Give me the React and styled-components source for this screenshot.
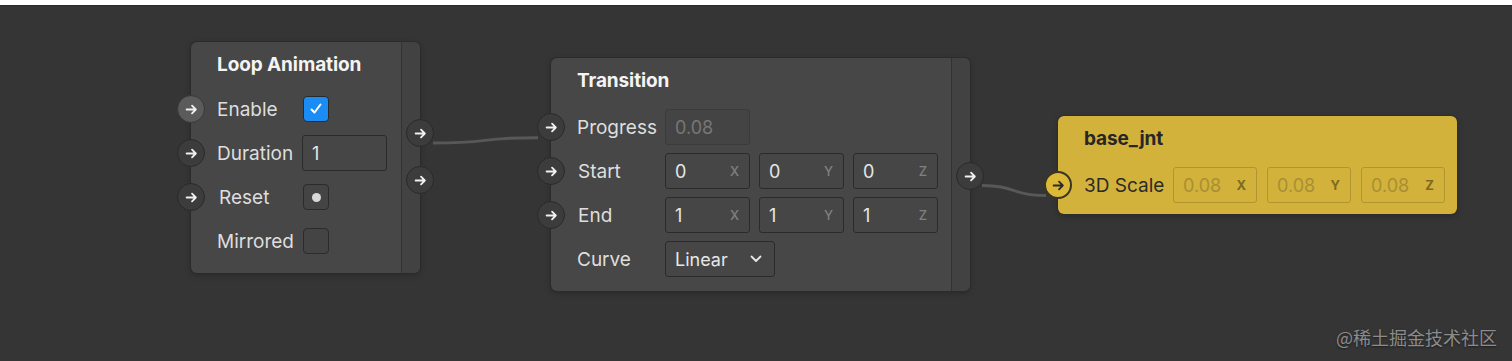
import React from 'react';
import styled, { createGlobalStyle, css } from 'styled-components';

const Global = createGlobalStyle`
  html, body { margin: 0; padding: 0; background: #ffffff; }
  body { font-family: Inter, "Noto Sans", sans-serif; -webkit-font-smoothing: antialiased; }
`;

const Page = styled.div`
  padding-top: 5px;
  background: #ffffff;
`;

const Canvas = styled.div`
  position: relative;
  height: 356px;
  background: #353535;
  overflow: hidden;
  border-top: 1px solid #2a2a2a;
  box-sizing: border-box;
`;

const Wires = styled.svg`
  position: absolute;
  inset: 0;
  width: 100%;
  height: 100%;
`;

const Node = styled.div`
  position: absolute;
  left: ${(p) => p.$x}px;
  top: ${(p) => p.$y}px;
  width: ${(p) => p.$w}px;
  display: flex;
  border-radius: 6px;
  background: ${(p) => (p.$yellow ? '#d2b23a' : '#474747')};
  box-shadow: 0 0 0 1px ${(p) => (p.$yellow ? '#2e2e2e' : '#2b2b2b')}, 0 2px 6px rgba(0, 0, 0, 0.25);
`;

const Body = styled.div`
  flex: 1;
  padding-bottom: ${(p) => p.$pb}px;
`;

const Header = styled.div`
  height: ${(p) => p.$h || 47}px;
  box-sizing: border-box;
  padding: 0 0 ${(p) => (p.$h && p.$h < 47 ? 0 : 2)}px 26px;
  display: flex;
  align-items: center;
  font-size: 19px;
  font-weight: 700;
  letter-spacing: -0.1px;
  color: ${(p) => (p.$yellow ? '#262626' : '#f4f4f4')};
`;

const Strip = styled.div`
  width: 18px;
  border-left: 1px solid #333333;
  background: #424242;
  border-radius: 0 6px 6px 0;
  display: flex;
  flex-direction: column;
  align-items: flex-end;
  padding-top: ${(p) => p.$top}px;
  gap: 19px;
`;

const Row = styled.div`
  position: relative;
  height: 44px;
  display: flex;
  align-items: center;
  padding-left: 26px;
`;

const Label = styled.div`
  width: ${(p) => p.$w}px;
  padding-left: ${(p) => p.$shift || 0}px;
  box-sizing: border-box;
  font-size: 19px;
  color: ${(p) => (p.$yellow ? '#2b2b2b' : '#dedede')};
  white-space: nowrap;
`;

const portVariants = {
  light: css`
    background: #5b5b5b;
    border: 1px solid #393939;
    color: #f0f0f0;
  `,
  dark: css`
    background: #3c3c3c;
    border: 1px solid #2a2a2a;
    color: #f0f0f0;
  `,
  yellow: css`
    background: #dcb937;
    border: 2px solid #3a3524;
    color: #2a2a2a;
  `,
};

const PortCircle = styled.div`
  width: 28px;
  height: 28px;
  border-radius: 50%;
  box-sizing: border-box;
  display: flex;
  align-items: center;
  justify-content: center;
  flex: none;
  ${(p) => portVariants[p.$variant]}
`;

const InPort = styled(PortCircle)`
  position: absolute;
  left: -14px;
  top: 50%;
  transform: translateY(-50%);
`;

const OutPort = styled(PortCircle)`
  margin-right: -14px;
`;

const Arrow = () => (
  <svg width="13" height="13" viewBox="0 0 12 12" fill="none" stroke="currentColor" strokeWidth="1.7" strokeLinecap="round" strokeLinejoin="round">
    <path d="M1.5 6 H10 M6.5 2.5 L10 6 L6.5 9.5" />
  </svg>
);

const Controls = styled.div`
  display: flex;
  gap: ${(p) => p.$gap}px;
`;

const fieldBase = css`
  box-sizing: border-box;
  height: 36px;
  border-radius: 3px;
  display: flex;
  align-items: center;
  padding: 0 10px 0 9px;
  font-size: 18px;
`;

const Field = styled.div`
  ${fieldBase}
  width: ${(p) => p.$w || 85}px;
  justify-content: space-between;
  ${(p) =>
    p.$yellow
      ? css`
          border: 1.5px solid #b09631;
          color: #a88f35;
        `
      : p.$disabled
      ? css`
          border: 1.5px solid #3b3b3b;
          background: #444444;
          color: #777777;
        `
      : css`
          border: 1.5px solid #2b2b2b;
          background: #464646;
          color: #e6e6e6;
        `}
`;

const Axis = styled.span`
  font-size: 13px;
  font-weight: ${(p) => (p.$yellow ? 700 : 500)};
  color: ${(p) => (p.$yellow ? '#7d6a22' : '#808080')};
`;

const Select = styled.div`
  ${fieldBase}
  width: 110px;
  justify-content: space-between;
  border: 1.5px solid #2b2b2b;
  background: #464646;
  color: #e6e6e6;
  padding-right: 12px;
`;

const Box = styled.div`
  width: 26px;
  height: 26px;
  box-sizing: border-box;
  border-radius: 4px;
  display: flex;
  align-items: center;
  justify-content: center;
  ${(p) =>
    p.$checked
      ? css`
          background: #1c8cf5;
          border: 1px solid #2a2a2a;
        `
      : css`
          background: #444444;
          border: 1.5px solid #2b2b2b;
        `}
`;

const Dot = styled.div`
  width: 9px;
  height: 9px;
  border-radius: 50%;
  background: #d8d8d8;
`;

const Watermark = styled.div`
  position: absolute;
  right: 15px;
  bottom: 14px;
  font-family: "Noto Sans CJK SC", "Noto Sans", sans-serif;
  font-size: 18px;
  line-height: 20px;
  color: #8c8c8c;
  text-shadow: 0 1px 2px rgba(0, 0, 0, 0.5);
`;

const Check = () => (
  <svg width="16" height="16" viewBox="0 0 16 16" fill="none" stroke="#ffffff" strokeWidth="2" strokeLinecap="round" strokeLinejoin="round">
    <path d="M3.5 8.5 L6.5 11.5 L12.5 3.5" />
  </svg>
);

const Chevron = () => (
  <svg width="12" height="8" viewBox="0 0 12 8" fill="none" stroke="#e6e6e6" strokeWidth="1.8" strokeLinecap="round" strokeLinejoin="round">
    <path d="M1.5 1.5 L6 6 L10.5 1.5" />
  </svg>
);

const Vec = ({ values, yellow, w, gap }) => (
  <Controls $gap={gap}>
    {['X', 'Y', 'Z'].map((a, i) => (
      <Field key={a} $yellow={yellow} $w={w}>
        <span>{values[i]}</span>
        <Axis $yellow={yellow}>{a}</Axis>
      </Field>
    ))}
  </Controls>
);

export default function App() {
  return (
    <Page>
      <Global />
      <Canvas>
        <Wires viewBox="0 -5 1512 356" preserveAspectRatio="none">
          <path d="M433 132.5 C 495 132.5, 475 127, 538 127" stroke="#585858" strokeWidth="3" fill="none" />
          <path d="M982 175 C 1015 175, 1012 185, 1046 185" stroke="#585858" strokeWidth="3" fill="none" />
        </Wires>

        <Node $x={191} $y={36} $w={229}>
          <Body $pb={10}>
            <Header $h={45}>Loop Animation</Header>
            <Row>
              <InPort $variant="light"><Arrow /></InPort>
              <Label $w={86}>Enable</Label>
              <Box $checked><Check /></Box>
            </Row>
            <Row>
              <InPort $variant="dark"><Arrow /></InPort>
              <Label $w={85}>Duration</Label>
              <Field $w={85}><span>1</span></Field>
            </Row>
            <Row>
              <InPort $variant="dark"><Arrow /></InPort>
              <Label $w={86} $shift={2}>Reset</Label>
              <Box><Dot /></Box>
            </Row>
            <Row>
              <Label $w={86}>Mirrored</Label>
              <Box />
            </Row>
          </Body>
          <Strip $top={77}>
            <OutPort $variant="dark"><Arrow /></OutPort>
            <OutPort $variant="dark"><Arrow /></OutPort>
          </Strip>
        </Node>

        <Node $x={551} $y={52} $w={419}>
          <Body $pb={10}>
            <Header>Transition</Header>
            <Row>
              <InPort $variant="dark"><Arrow /></InPort>
              <Label $w={88}>Progress</Label>
              <Field $disabled $w={85}><span>0.08</span></Field>
            </Row>
            <Row>
              <InPort $variant="dark"><Arrow /></InPort>
              <Label $w={88} $shift={1}>Start</Label>
              <Vec gap={9} values={['0', '0', '0']} />
            </Row>
            <Row>
              <InPort $variant="dark"><Arrow /></InPort>
              <Label $w={88} $shift={1}>End</Label>
              <Vec gap={9} values={['1', '1', '1']} />
            </Row>
            <Row>
              <Label $w={88}>Curve</Label>
              <Select>
                <span>Linear</span>
                <Chevron />
              </Select>
            </Row>
          </Body>
          <Strip $top={104}>
            <OutPort $variant="dark"><Arrow /></OutPort>
          </Strip>
        </Node>

        <Node $x={1058} $y={110} $w={399} $yellow>
          <Body $pb={7}>
            <Header $yellow>base_jnt</Header>
            <Row>
              <InPort $variant="yellow"><Arrow /></InPort>
              <Label $w={89} $yellow>3D Scale</Label>
              <Vec yellow gap={10} w={84} values={['0.08', '0.08', '0.08']} />
            </Row>
          </Body>
        </Node>

        <Watermark>@稀土掘金技术社区</Watermark>
      </Canvas>
    </Page>
  );
}
